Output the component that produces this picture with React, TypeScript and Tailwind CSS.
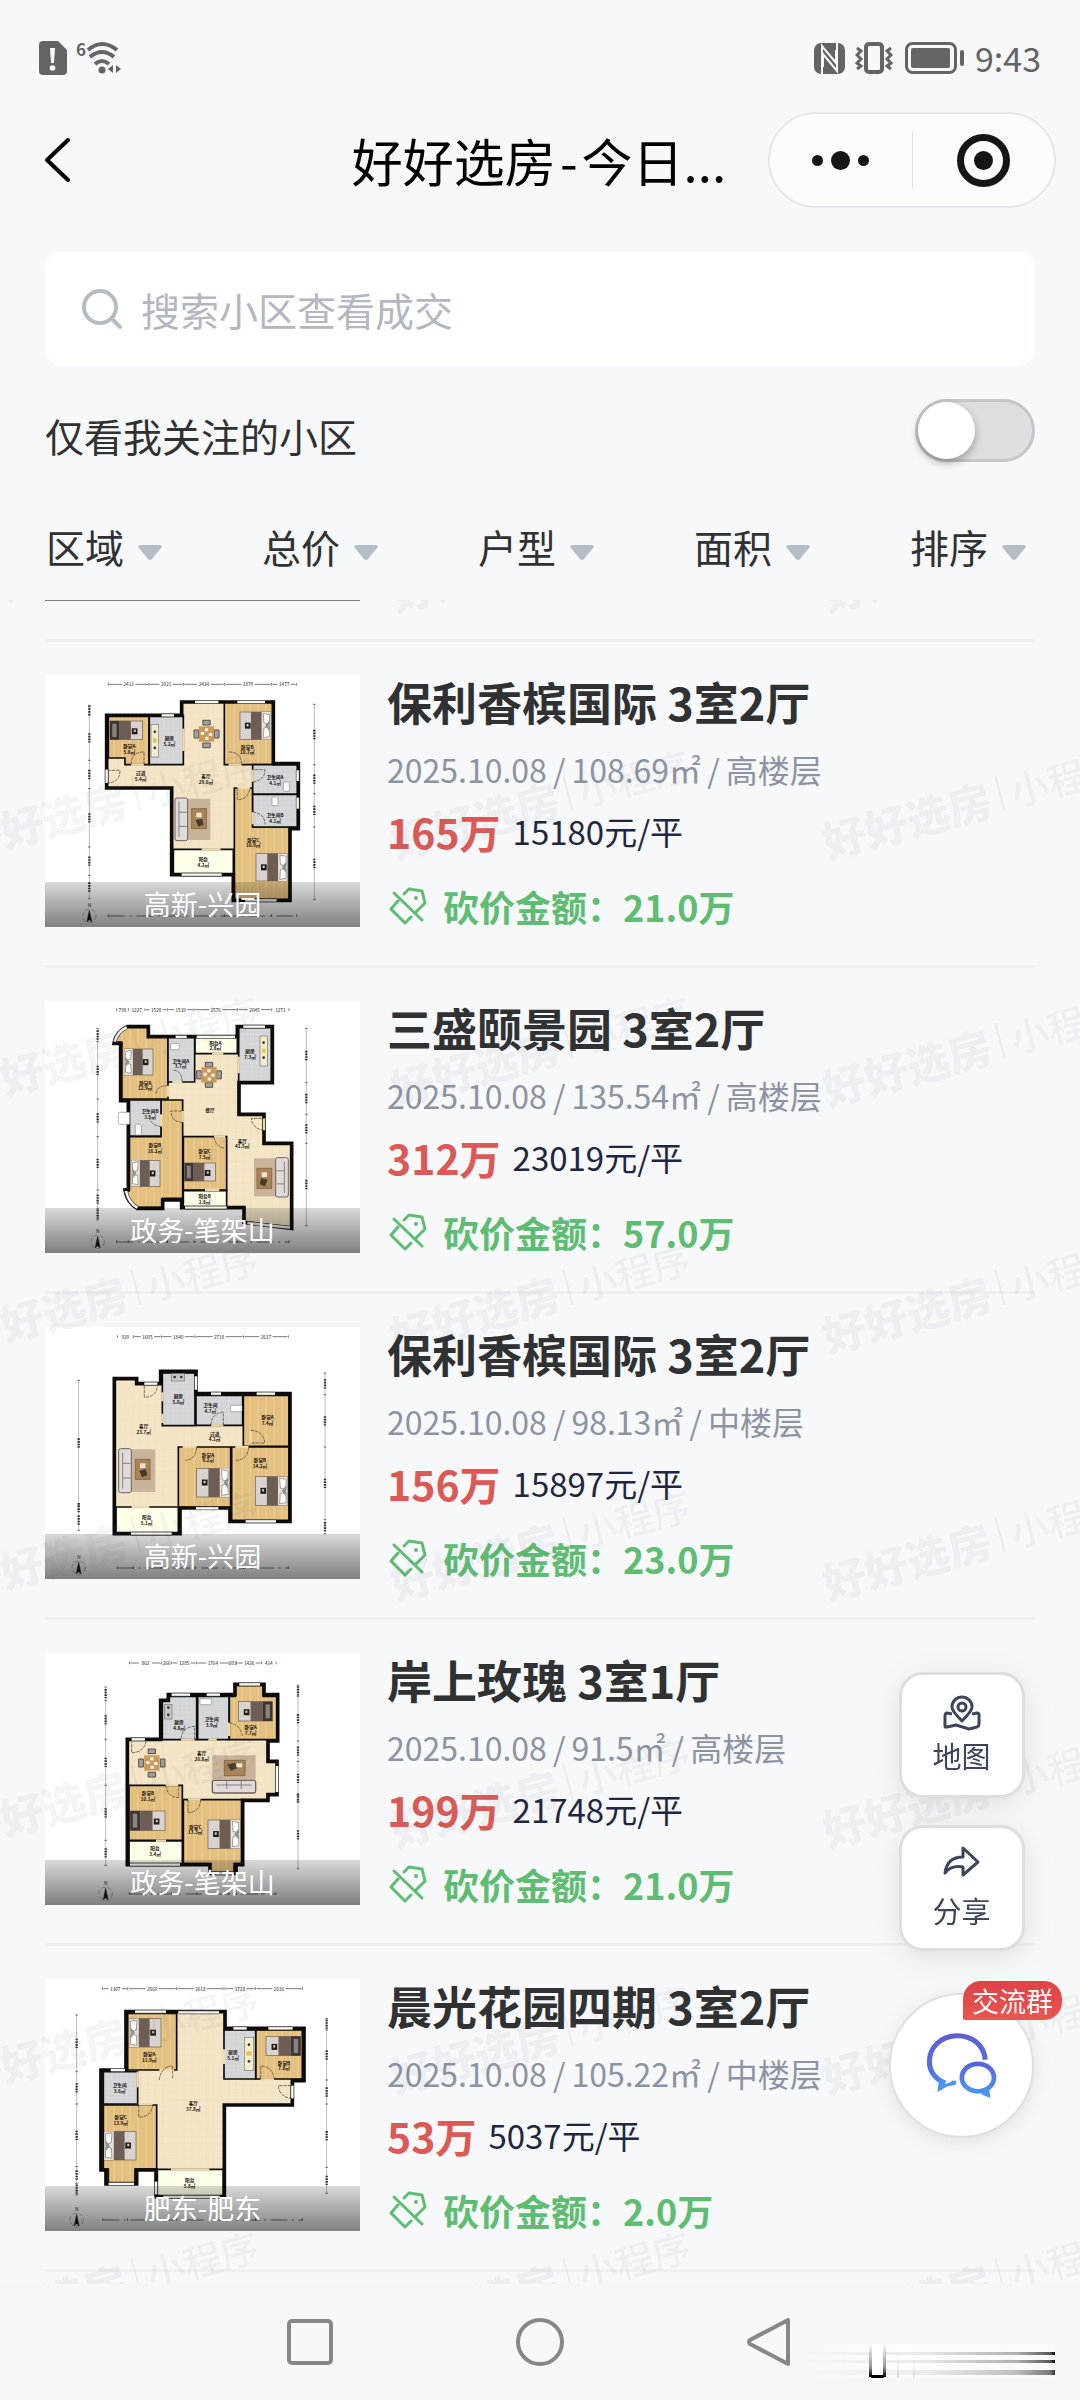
import React, { useState } from "react";

type Box = [number, number, number, number];
type Furniture = { kind: "bedL" | "bedR" | "sofaL" | "sofaR" | "sofaB" | "dining" | "stove" | "basin"; box: Box };
type Plan = {
  id: string;
  top: number;
  outline: string;
  wood: string[];
  gray: string[];
  balcony: string[];
  windows: string[];
  gaps: string[];
  doors: string[];
  furniture: Furniture[];
  labels: [number, number, string, string][];
  dimTop: { y: number; ticks: number[]; nums: string[] };
  dimLeft: { x: number; ticks: number[] };
  dimRight: { x: number; ticks: number[] };
};

type Listing = {
  name: string;
  area: string;
  floor: string;
  price: string;
  unit: string;
  cut: string;
  place: string;
  plan: Plan;
};

const plans: Plan[] = [
  {
    id: "a",
    top: 44,
    outline: "M455 125H730V310H805V505H780V720H610V643H425V383H230V165H455Z",
    wood: ["M235 165H357V313H285V293H235Z", "M583 125H730V313H583Z", "M613 383H668V500H780V720H613Z"],
    gray: ["M358 165H460V313H358Z", "M668 313H803V402H668Z", "M668 402H803V500H668Z"],
    balcony: ["M430 567H610V643H430Z"],
    windows: ["M495 125H565", "M622 125H705", "M395 165H432", "M803 330V362", "M803 412V445", "M455 643H575", "M645 720H740", "M230 328V368"],
    gaps: ["M303 313H342", "M596 313H635", "M668 328V365", "M668 455V492", "M622 383H660", "M460 205V272", "M515 567H572"],
    doors: ["M342 313V275Q303 275 303 313", "M635 313Q635 275 596 275", "M668 365Q705 360 705 328H668", "M622 383V418Q655 418 660 383", "M230 368Q270 368 270 330H236", "M668 455Q705 460 705 492"],
    furniture: [
      { kind: "bedL", box: [240, 182, 98, 56] },
      { kind: "bedR", box: [630, 155, 92, 82] },
      { kind: "bedR", box: [678, 580, 94, 82] },
      { kind: "sofaL", box: [433, 413, 108, 128] },
      { kind: "dining", box: [492, 180, 75, 82] },
      { kind: "stove", box: [363, 193, 23, 97] },
      { kind: "basin", box: [760, 365, 18, 28] },
      { kind: "basin", box: [726, 410, 18, 26] },
    ],
    labels: [[298, 264, "卧室A", "5.8㎡"], [418, 240, "厨房", "5.2㎡"], [652, 266, "卧室B", "10.7㎡"], [332, 346, "过道", "5.4㎡"], [528, 354, "客厅", "29.6㎡"], [735, 358, "卫生间A", "4.1㎡"], [735, 471, "卫生间B", "4.1㎡"], [670, 545, "卧室C", "16.9㎡"], [520, 604, "阳台", "4.2㎡"]],
    dimTop: { y: 72, ticks: [235, 357, 460, 583, 725, 800], nums: ["2411", "2021", "2434", "2870", "1477"] },
    dimLeft: { x: 178, ticks: [135, 165, 300, 385, 560, 645, 715] },
    dimRight: { x: 853, ticks: [132, 313, 400, 500, 718] },
  },
  {
    id: "b",
    top: 48,
    outline: "M292 125H355V155H622V125H727V293H627V388H702V475H785V730L642 712V668H455V645H398V670H322Q292 655 285 615H295V347H272V175H252Q258 140 292 125Z",
    wood: ["M292 125H355V155H414V342H275V172H254Q260 140 292 125Z", "M298 455H393V345H458V640H398V668H322Q292 655 287 612H298Z", "M460 455H590V615H460Z"],
    gray: ["M414 155H494V291H414Z", "M626 125H725V291H626Z", "M298 345H393V453H298Z"],
    balcony: ["M495 157H622V206H495Z", "M460 617H590V668H460Z"],
    windows: ["M500 156H615", "M437 156H470", "M640 125H705", "M254 170Q262 140 290 127", "M288 618Q296 654 322 668", "M652 714L780 728", "M465 668H590"],
    gaps: ["M427 291H457", "M414 302V335", "M458 378V412", "M393 388V425", "M552 455H586", "M546 206H580", "M702 400V436", "M626 215V265", "M525 615H568"],
    doors: ["M457 291Q455 255 427 255", "M414 302Q380 302 378 325", "M458 412Q425 412 422 378H458", "M702 436Q668 432 664 400H702", "M552 455Q555 485 586 490", "M393 425Q360 420 356 392"],
    furniture: [
      { kind: "bedL", box: [283, 192, 86, 78] },
      { kind: "bedL", box: [304, 526, 86, 78] },
      { kind: "bedL", box: [464, 534, 92, 54] },
      { kind: "sofaR", box: [672, 518, 105, 118] },
      { kind: "dining", box: [500, 232, 74, 75] },
      { kind: "stove", box: [690, 153, 22, 90] },
      { kind: "basin", box: [422, 176, 26, 18] },
      { kind: "basin", box: [316, 418, 18, 32] },
      { kind: "basin", box: [265, 382, 34, 36] },
    ],
    labels: [[346, 300, "卧室A", "12.9㎡"], [452, 234, "卫生间A", "3.7㎡"], [556, 180, "阳台A", "2.8㎡"], [660, 205, "厨房", "7.3㎡"], [360, 385, "卫生间B", "3.5㎡"], [375, 488, "卧室B", "16.2㎡"], [524, 506, "卧室C", "7.5㎡"], [637, 474, "客厅", "41.5㎡"], [524, 641, "阳台B", "2.8㎡"], [540, 364, "", "餐厅"]],
    dimTop: { y: 74, ticks: [260, 295, 345, 412, 492, 622, 725, 777], nums: ["798", "1227", "1528", "1539", "2576", "2045", "1271"] },
    dimLeft: { x: 203, ticks: [130, 170, 342, 455, 615, 670, 705] },
    dimRight: { x: 829, ticks: [130, 293, 388, 475, 722] },
  },
  {
    id: "c",
    top: 52,
    outline: "M253 207H320V222H392V185H498V252H780V635H600V595H450V672H253Z",
    wood: ["M640 257H777V410H640Z", "M445 412H602V593H445Z", "M605 412H777V635H605Z"],
    gray: ["M397 190H495V348H397Z", "M498 257H638V347H498Z"],
    balcony: ["M258 592H445V670H258Z"],
    windows: ["M498 200V240", "M543 252H573", "M680 252H735", "M343 222H382", "M498 596H565", "M647 635H738", "M303 672H425"],
    gaps: ["M543 347H580", "M458 412H500", "M616 412H656", "M397 248V275", "M397 312V340", "M305 592H358", "M662 362V400"],
    doors: ["M343 228V263Q380 262 382 228", "M580 347V307Q543 312 543 347", "M500 412Q498 450 465 452", "M656 412Q654 450 618 452", "M662 362Q702 365 704 400H662"],
    furniture: [
      { kind: "sofaL", box: [264, 417, 112, 132] },
      { kind: "bedR", box: [500, 476, 98, 86] },
      { kind: "bedR", box: [676, 501, 96, 86] },
      { kind: "stove", box: [424, 192, 40, 22] },
      { kind: "basin", box: [602, 287, 34, 19] },
    ],
    labels: [[341, 357, "客厅", "23.7㎡"], [445, 267, "厨房", "5.0㎡"], [541, 293, "卫生间", "4.7㎡"], [713, 330, "卧室A", "7.4㎡"], [554, 379, "过道", "4.1㎡"], [534, 442, "卧室A", "9.2㎡"], [690, 459, "卧室B", "14.2㎡"], [350, 629, "阳台", "5.1㎡"]],
    dimTop: { y: 81, ticks: [262, 310, 394, 495, 640, 775], nums: ["920", "1605", "1840", "2718", "2637"] },
    dimLeft: { x: 146, ticks: [212, 588, 600, 662] },
    dimRight: { x: 885, ticks: [190, 255, 412, 630, 672] },
  },
  {
    id: "d",
    top: 53,
    outline: "M292 312H392V195H415V178H615V147H702V178H743V317H714V378H741V478H714V495H638V688H618V714H540V688H292Z",
    wood: ["M598 183H615V150H700V183H742V313H598Z", "M297 450H457V615H297Z", "M460 493H635V685H612V714H540V685H460Z"],
    gray: ["M397 195H415V183H500V313H397Z", "M503 183H597V313H503Z"],
    balcony: ["M297 617H457V687H297Z"],
    windows: ["M425 178H480", "M530 178H570", "M628 147H690", "M305 312H345", "M741 392V470", "M300 688H450", "M548 714H605"],
    gaps: ["M453 313H494", "M597 262V302", "M535 313H560", "M407 449H445", "M474 493H512", "M378 616H408"],
    doors: ["M494 313V273Q455 275 453 313", "M597 262Q632 268 637 302", "M348 315Q345 350 305 352V320", "M407 449Q412 485 445 487V449", "M474 493V532Q510 530 512 493"],
    furniture: [
      { kind: "bedR", box: [625, 199, 102, 58] },
      { kind: "bedL", box: [301, 527, 104, 58] },
      { kind: "bedR", box: [534, 554, 96, 85] },
      { kind: "sofaB", box: [547, 360, 130, 115] },
      { kind: "dining", box: [326, 341, 79, 84] },
      { kind: "stove", box: [404, 207, 22, 44] },
      { kind: "basin", box: [510, 190, 34, 18] },
    ],
    labels: [[447, 267, "厨房", "4.8㎡"], [545, 259, "卫生间", "3.9㎡"], [662, 283, "卧室A", "7.7㎡"], [515, 361, "客厅", "26.8㎡"], [354, 480, "卧室B", "10.1㎡"], [496, 581, "卧室C", "13.3㎡"], [375, 645, "阳台", "3.4㎡"]],
    dimTop: { y: 83, ticks: [298, 395, 425, 500, 597, 620, 695, 738], nums: ["862", "266", "1285", "1764", "203", "1426", "414"] },
    dimLeft: { x: 227, ticks: [155, 195, 312, 450, 615, 690] },
    dimRight: { x: 804, ticks: [150, 183, 317, 378, 480, 497, 700] },
  },
  {
    id: "e",
    top: 57,
    outline: "M288 155H585V205H822V362H787V435H583V710H378V630H320V672H228V630H213V330H288Z",
    wood: ["M293 160H440V330H293Z", "M677 210H817V357H677Z", "M220 435H380V627H315V668H235V627H220Z"],
    gray: ["M582 210H677V357H582Z", "M220 335H323V432H220Z"],
    balcony: ["M382 628H580V710H382Z"],
    windows: ["M315 155H408", "M445 157H567", "M610 205H650", "M715 205H788", "M242 330H285", "M787 377V415", "M236 672H312", "M378 665V703", "M400 711H570"],
    gaps: ["M388 330H432", "M692 358H732", "M326 433H368", "M582 268V312", "M323 335V382", "M423 628H538"],
    doors: ["M388 360Q392 320 428 318V355", "M692 355V318Q728 320 732 355", "M787 415Q748 412 745 377H787", "M326 435V472Q365 470 368 435"],
    furniture: [
      { kind: "bedL", box: [298, 176, 95, 85] },
      { kind: "bedR", box: [708, 229, 104, 58] },
      { kind: "bedL", box: [223, 514, 95, 86] },
      { kind: "stove", box: [643, 232, 28, 100] },
    ],
    labels: [[358, 290, "卧室A", "11.9㎡"], [609, 283, "厨房", "5.1㎡"], [762, 315, "卧室B", "7.8㎡"], [269, 383, "卫生间", "3.6㎡"], [272, 478, "卧室C", "13.9㎡"], [490, 436, "客厅", "37.8㎡"], [479, 668, "阳台", "5.8㎡"]],
    dimTop: { y: 86, ticks: [218, 293, 440, 582, 677, 817], nums: ["1307", "2869", "2618", "1728", "2616"] },
    dimLeft: { x: 140, ticks: [165, 335, 432, 620, 670, 705] },
    dimRight: { x: 890, ticks: [175, 210, 360, 432, 622, 700] },
  },
];

const listings: Listing[] = [
  { name: "保利香槟国际 3室2厅", area: "108.69㎡", floor: "高楼层", price: "165万", unit: "15180元/平", cut: "21.0万", place: "高新-兴园", plan: plans[0] },
  { name: "三盛颐景园 3室2厅", area: "135.54㎡", floor: "高楼层", price: "312万", unit: "23019元/平", cut: "57.0万", place: "政务-笔架山", plan: plans[1] },
  { name: "保利香槟国际 3室2厅", area: "98.13㎡", floor: "中楼层", price: "156万", unit: "15897元/平", cut: "23.0万", place: "高新-兴园", plan: plans[2] },
  { name: "岸上玫瑰 3室1厅", area: "91.5㎡", floor: "高楼层", price: "199万", unit: "21748元/平", cut: "21.0万", place: "政务-笔架山", plan: plans[3] },
  { name: "晨光花园四期 3室2厅", area: "105.22㎡", floor: "中楼层", price: "53万", unit: "5037元/平", cut: "2.0万", place: "肥东-肥东", plan: plans[4] },
];

function Bed({ box: [x, y, w, h], flip }: { box: Box; flip: boolean }) {
  const wide = h > 65;
  return (
    <g transform={flip ? `translate(${2 * x + w} 0) scale(-1 1)` : undefined}>
      <rect x={x} y={y} width={w} height={h} fill="#d8d3cf" stroke="#6a5b50" strokeWidth="2" />
      <rect x={x + w * 0.36} y={y} width={w * 0.35} height={h} fill="#6d5d54" />
      <rect x={x + w * 0.71} y={y} width={w * 0.29} height={h} fill={wide ? "#e9e4dc" : "#3b3532"} />
      {wide ? (
        <>
          <path d={`M${x + w * 0.76} ${y + 4}L${x + w * 0.96} ${y + 8}V${y + h * 0.45}L${x + w * 0.78} ${y + h * 0.4}Z`} fill="#fff" stroke="#77736f" strokeWidth="2" />
          <path d={`M${x + w * 0.78} ${y + h * 0.58}L${x + w * 0.96} ${y + h * 0.55}V${y + h - 8}L${x + w * 0.76} ${y + h - 5}Z`} fill="#fff" stroke="#77736f" strokeWidth="2" />
          <path d={`M${x + w * 0.96} ${y + h * 0.3}L${x + w * 0.82} ${y + h * 0.5}L${x + w * 0.96} ${y + h * 0.7}Z`} fill="#8d9690" />
        </>
      ) : (
        <rect x={x + w * 0.8} y={y + 8} width={w * 0.13} height={h - 16} fill="#8b837d" />
      )}
      <rect x={x + w * 0.16} y={y + h * 0.39} width="17" height="18" fill="#1f1c1a" />
      <rect x={x + w * 0.16 + 5} y={y + h * 0.39 + 4} width="6" height="7" fill="#d8d3cf" />
    </g>
  );
}

function Piece({ kind, box }: Furniture) {
  const [x, y, w, h] = box;
  if (kind === "bedL" || kind === "bedR") return <Bed box={box} flip={kind === "bedL"} />;
  if (kind === "basin") return <rect x={x} y={y} width={w} height={h} rx="3" fill="#fff" stroke="#8d8d8d" strokeWidth="2" />;
  if (kind === "stove") {
    const upright = h > w;
    return (
      <g>
        <rect x={x} y={y} width={w} height={h} fill={h > 60 ? "#f3ecc9" : "#c3c5c7"} stroke="#777" strokeWidth="2" />
        <circle cx={upright ? x + w / 2 : x + 10} cy={upright ? y + h * 0.22 : y + 10} r="4" fill="#333" />
        <circle cx={upright ? x + w / 2 : x + 30} cy={upright ? y + h * 0.72 : y + 10} r="4" fill="#333" />
        {h > 60 && <rect x={x + 6} y={y + h * 0.42} width={w - 12} height="13" fill="#e1c55c" />}
      </g>
    );
  }
  if (kind === "dining") {
    const cx = x + w / 2;
    const cy = y + h / 2;
    return (
      <g>
        <path d={`M${cx - 11} ${y}h22v14h-22z M${cx - 11} ${y + h - 14}h22v14h-22z M${x} ${cy - 12}h14v24h-14z M${x + w - 14} ${cy - 12}h14v24h-14z`} fill="#a3a09d" stroke="#55504c" strokeWidth="3" />
        <rect x={cx - 23} y={cy - 23} width="46" height="46" fill="#c99a5c" />
        <path d={`M${cx - 17} ${cy - 6}h10v9h-10z M${cx - 5} ${cy - 17}h10v9h-10z M${cx + 7} ${cy - 3}h10v9h-10z M${cx - 4} ${cy + 8}h10v9h-10z`} fill="#f4efe8" />
      </g>
    );
  }
  if (kind === "sofaB") {
    return (
      <g>
        <rect x={x} y={y} width={w} height={h - 42} fill="#c9b39b" />
        <rect x={x + 36} y={y + 15} width="62" height="46" fill="#a88457" stroke="#8b6b42" strokeWidth="3" />
        <path d={`M${x + 44} ${y + 28}l24 -6 8 16 -20 8z`} fill="#453b30" />
        <path d={`M${x + 72} ${y + 24}h18v12h-18z`} fill="#eee5d7" />
        <rect x={x} y={y + h - 40} width={w} height="38" rx="6" fill="#e0dad8" stroke="#6d6262" strokeWidth="4" />
        <path d={`M${x + 12} ${y + h - 26}H${x + w - 12} M${x + w / 3} ${y + h - 38}v24 M${x + (w * 2) / 3} ${y + h - 38}v24`} stroke="#8b7f80" strokeWidth="3" fill="none" />
      </g>
    );
  }
  return (
    <g transform={kind === "sofaR" ? `translate(${2 * x + w} 0) scale(-1 1)` : undefined}>
      <rect x={x + 30} y={y + 2} width={w - 30} height={h - 4} fill="#c9b39b" />
      <rect x={x + 52} y={y + 32} width="44" height="60" fill="#a88457" stroke="#8b6b42" strokeWidth="3" />
      <path d={`M${x + 66} ${y + 44}h16v14h-16z`} fill="#eee5d7" />
      <path d={`M${x + 64} ${y + 66}l20 -4 4 18 -16 6z`} fill="#453b30" />
      <rect x={x + 2} y={y} width="38" height={h} rx="6" fill="#e0dad8" stroke="#6d6262" strokeWidth="3" />
      <path d={`M${x + 14} ${y + 12}V${y + h - 12} M${x + 14} ${y + h / 3}h24 M${x + 14} ${y + (h * 2) / 3}h24`} stroke="#8b7f80" strokeWidth="3" fill="none" />
    </g>
  );
}

function FloorPlan({ plan }: { plan: Plan }) {
  const wood = `wood-${plan.id}`;
  const tile = `tile-${plan.id}`;
  const gray = `gray-${plan.id}`;
  const { dimTop, dimLeft, dimRight } = plan;
  return (
    <svg viewBox={`45 ${plan.top} 945 756`} className="block w-full" aria-hidden="true">
      <defs>
        <pattern id={wood} width="24" height="60" patternUnits="userSpaceOnUse">
          <rect width="24" height="60" fill="#e5c283" />
          <path d="M6 0V60M18 0V60" stroke="#dbb56f" strokeWidth="2" />
          <path d="M12 0V60" stroke="#edd09a" strokeWidth="3" />
        </pattern>
        <pattern id={tile} width="22" height="22" patternUnits="userSpaceOnUse">
          <rect width="22" height="22" fill="#f3e5c6" />
          <path d="M0 0H22M0 0V22" stroke="#ecddba" strokeWidth="2" />
        </pattern>
        <pattern id={gray} width="14" height="14" patternUnits="userSpaceOnUse">
          <rect width="14" height="14" fill="#d5d7d9" />
          <path d="M0 0H14M0 0V14" stroke="#c9cccf" strokeWidth="2" />
        </pattern>
      </defs>
      <path d={plan.outline} fill={`url(#${tile})`} />
      <g stroke="#0d0b09" strokeWidth="5">
        {plan.wood.map((d) => <path key={d} d={d} fill={`url(#${wood})`} />)}
        {plan.gray.map((d) => <path key={d} d={d} fill={`url(#${gray})`} />)}
        {plan.balcony.map((d) => <path key={d} d={d} fill="#fefee9" />)}
      </g>
      <path d={plan.outline} fill="none" stroke="#0d0b09" strokeWidth="11" />
      {plan.gaps.map((d) => <path key={d} d={d} stroke="#eed9ae" strokeWidth="7" />)}
      {plan.windows.map((d) => (
        <g key={d} fill="none">
          <path d={d} stroke="#4a4743" strokeWidth="11" />
          <path d={d} stroke="#f8f8f4" strokeWidth="7" />
        </g>
      ))}
      {plan.doors.map((d) => <path key={d} d={d} fill="none" stroke="#3c352c" strokeWidth="2" strokeDasharray="10 3" />)}
      {plan.furniture.map((f) => <Piece key={f.box.join()} {...f} />)}
      <g fill="#15110c" textAnchor="middle" fontSize="14" fontWeight="700">
        {plan.labels.map(([x, y, name, size]) => (
          <g key={`${x}-${y}`}>
            {name && <text x={x} y={y - 1}>{name}</text>}
            <text x={x} y={y + 16}>{size}</text>
          </g>
        ))}
        {dimTop.nums.map((n, i) => (
          <text key={i} x={(dimTop.ticks[i] + dimTop.ticks[i + 1]) / 2} y={dimTop.y + 6} fontWeight="400">{n}</text>
        ))}
      </g>
      <g stroke="#333" strokeWidth="2" fill="#333">
        {dimTop.nums.map((n, i) => {
          const a = dimTop.ticks[i];
          const b = dimTop.ticks[i + 1];
          const m = (a + b) / 2;
          return b - a > 60 ? <path key={i} d={`M${a + 3} ${dimTop.y}H${m - 20}M${m + 20} ${dimTop.y}H${b - 3}`} /> : null;
        })}
        {dimTop.ticks.map((x) => <path key={x} d={`M${x} ${dimTop.y - 4}V${dimTop.y + 4}`} />)}
        {dimTop.ticks.map((x) => <path key={x} d={`M${x} ${plan.top + 718}v8`} />)}
        <path d={`M${dimTop.ticks[0]} ${plan.top + 723}H${dimTop.ticks[dimTop.ticks.length - 1]}`} strokeDasharray="50 14 6 14" />
        {[dimLeft, dimRight].map((d) => (
          <g key={d.x}>
            <path d={`M${d.x} ${d.ticks[0]}V${d.ticks[d.ticks.length - 1]}`} strokeWidth="1" />
            {d.ticks.slice(1).map((t, i) => (
              <path key={t} d={`M${d.x} ${(t + d.ticks[i]) / 2 - 14}v28`} strokeWidth="7" strokeDasharray="5 3" />
            ))}
            {d.ticks.map((t) => <path key={t} d={`M${d.x - 4} ${t}h8`} />)}
          </g>
        ))}
        <circle cx={dimLeft.x} cy={plan.top + 722} r="20" fill="none" strokeWidth="1" strokeDasharray="14 6" />
        <path d={`M${dimLeft.x} ${plan.top + 706}l7 34-7-6-7 6z`} fill="#111" />
        <text x={dimLeft.x - 5} y={plan.top + 695} fontSize="15" stroke="none">N</text>
      </g>
    </svg>
  );
}

function TagIcon() {
  return (
    <svg viewBox="0 0 38 38" className="ml-[2px] h-[38px] w-[38px] shrink-0" fill="none" stroke="#5fbc73" strokeWidth="3" strokeLinejoin="round" strokeLinecap="round" aria-hidden="true">
      <path d="M15 7L20 2L33 4L36 16L27 25" />
      <path d="M9 14L2 22L16 36L22 30" />
      <path d="M5 6L33 33" />
      <circle cx="27" cy="11" r="2" fill="#5fbc73" stroke="none" />
    </svg>
  );
}

function ListingRow({ item }: { item: Listing }) {
  return (
    <article className="flex items-start gap-[27px] border-t-[3px] border-[#eff0f2] pt-[33px] pb-[38px]">
      <div className="relative w-[315px] shrink-0 overflow-hidden bg-white">
        <FloorPlan plan={item.plan} />
        <div className="absolute inset-x-0 bottom-0 flex h-[45px] items-center justify-center bg-linear-to-b from-black/15 to-black/50 text-[27px] text-white">
          {item.place}
        </div>
      </div>
      <div className="min-w-0">
        <h2 className="text-[45px] leading-[54px] font-bold text-[#303133]">{item.name}</h2>
        <p className="mt-4 text-[32px] leading-[48px] text-[#8d93a3]">
          2025.10.08<span className="px-[6px]">/</span>{item.area}<span className="px-[6px]">/</span>{item.floor}
        </p>
        <p className="mt-3 flex items-center gap-3 leading-[52px]">
          <strong className="text-[41px] font-bold text-[#dc5a56]">{item.price}</strong>
          <span className="text-[33px] text-[#1f2740]">{item.unit}</span>
        </p>
        <p className="mt-[30px] flex items-center text-[36px] leading-[36px] font-bold text-[#5fbc73]">
          <TagIcon />
          <span className="ml-4">砍价金额：{item.cut}</span>
        </p>
      </div>
    </article>
  );
}

function Watermark() {
  return (
    <div className="pointer-events-none absolute inset-0 flex justify-center overflow-hidden text-[#5a5f6e]/[0.08]" aria-hidden="true">
      <div className="-mt-[169px] grid h-max shrink-0 auto-rows-[247px] grid-cols-[432px_432px_432px]">
        {Array.from({ length: 24 }, (_, i) => (
          <div key={i} className="flex items-center justify-center">
            <div className="flex -rotate-[15deg] items-center whitespace-nowrap">
              <span className="text-[43px] font-black">好好选房</span>
              <span className="mx-[10px] h-[36px] w-[2px] bg-current" />
              <span className="text-[38px] font-medium">小程序</span>
            </div>
          </div>
        ))}
      </div>
    </div>
  );
}

function StatusBar() {
  return (
    <div className="flex h-[112px] items-center justify-between pt-1 pr-[39px] pl-[39px] text-[#646464]">
      <div className="flex items-center gap-[9px]">
        <svg viewBox="0 0 28 34" className="h-[34px] w-[28px]" aria-hidden="true">
          <path d="M4 0H19L28 9V30Q28 34 24 34H4Q0 34 0 30V4Q0 0 4 0Z" fill="currentColor" />
          <path d="M11 7h5l-1 15h-3z" fill="#f7f8fa" />
          <circle cx="13.500" cy="27" r="2.800" fill="#f7f8fa" />
        </svg>
        <div className="flex items-start">
          <span className="text-[17px] leading-[15px] font-bold">6</span>
          <svg viewBox="0 0 36 34" className="h-[34px] w-[36px]" fill="none" stroke="currentColor" strokeWidth="4" aria-hidden="true">
            <path d="M2 9Q16 -3 31 9" />
            <path d="M4 16Q16 6 28 16" />
            <path d="M9 23Q16 17 23 23" />
            <circle cx="16" cy="29" r="3.500" fill="currentColor" stroke="none" />
            <path d="M27 24V32L22 28ZM30 24V32L35 28Z" fill="currentColor" stroke="none" />
          </svg>
        </div>
      </div>
      <div className="flex items-center">
        <svg viewBox="0 0 31 31" className="h-[31px] w-[31px]" aria-hidden="true">
          <rect width="31" height="31" rx="7" fill="currentColor" />
          <path d="M8 31V3L22 20V7M23 0V28L9 11V24" fill="none" stroke="#f7f8fa" strokeWidth="2" />
        </svg>
        <svg viewBox="0 0 38 32" className="ml-[10px] h-8 w-[38px]" fill="none" stroke="currentColor" aria-hidden="true">
          <rect x="11" y="2" width="16" height="28" rx="3" strokeWidth="4" />
          <path d="M2 6L6 9L2 13L6 17L2 21L6 24L2 27M36 6L32 9L36 13L32 17L36 21L32 24L36 27" strokeWidth="3" />
        </svg>
        <svg viewBox="0 0 60 32" className="ml-[12px] h-8 w-[60px]" aria-hidden="true">
          <rect x="1.500" y="1.500" width="49" height="29" rx="6" fill="none" stroke="currentColor" strokeWidth="3" />
          <rect x="6" y="6" width="39" height="20" rx="2" fill="currentColor" />
          <rect x="55" y="8" width="4" height="16" rx="2" fill="currentColor" />
        </svg>
        <time className="ml-[10px] text-[34px] leading-[40px]">9:43</time>
      </div>
    </div>
  );
}

function TitleBar() {
  return (
    <header className="grid h-24 grid-cols-[1fr_auto_1fr] items-center pr-6 pl-[42px]">
      <button type="button" aria-label="返回" className="h-12 w-8">
        <svg viewBox="0 0 32 48" className="h-full w-full" fill="none" stroke="#000" strokeWidth="4" strokeLinecap="round" strokeLinejoin="round">
          <path d="M26 4L5 24L26 44" />
        </svg>
      </button>
      <h1 className="pr-5 text-[51px] leading-[60px] text-black">
        好好选房<span className="px-1">-</span>今日...
      </h1>
      <div className="flex h-24 w-[288px] items-center justify-self-end rounded-full border-2 border-[#e6e7e9] bg-[#fcfcfd]">
        <button type="button" aria-label="更多" className="flex flex-1 items-center justify-center gap-2">
          <i className="h-[11px] w-[11px] rounded-full bg-[#161616]" />
          <i className="h-[19px] w-[19px] rounded-full bg-[#161616]" />
          <i className="h-[11px] w-[11px] rounded-full bg-[#161616]" />
        </button>
        <span className="h-[58px] w-px bg-[#e3e4e6]" />
        <button type="button" aria-label="关闭" className="flex flex-1 items-center justify-center">
          <span className="flex h-[53px] w-[53px] items-center justify-center rounded-full border-[7px] border-[#161616]">
            <i className="h-[19px] w-[19px] rounded-full bg-[#161616]" />
          </span>
        </button>
      </div>
    </header>
  );
}

function FloatingActions() {
  return (
    <div className="fixed right-[46px] bottom-[262px] flex flex-col items-center">
      <button type="button" className="flex h-[126px] w-[126px] flex-col items-center justify-center rounded-[24px] border-[3px] border-[#dddee0] bg-white text-[29px] leading-[40px] text-[#3d4658] shadow-[0_6px_30px_rgba(0,0,0,0.1)]">
        <svg viewBox="0 0 38 36" className="mb-1 h-9 w-[38px]" fill="none" stroke="currentColor" strokeWidth="3" strokeLinejoin="round" aria-hidden="true">
          <path d="M19 26Q9 16 9 12A10 10 0 0 1 29 12Q29 16 19 26Z" />
          <circle cx="19" cy="12" r="4" />
          <path d="M9 19L4 18Q2 18 2 21V31Q2 33 4 32L13 30L26 34L34 32Q36 31 36 29V20Q36 18 34 18L29 19" />
        </svg>
        地图
      </button>
      <button type="button" className="mt-[27px] flex h-[126px] w-[126px] flex-col items-center justify-center rounded-[24px] border-[3px] border-[#dddee0] bg-white text-[29px] leading-[40px] text-[#3d4658] shadow-[0_6px_30px_rgba(0,0,0,0.1)]">
        <svg viewBox="0 0 38 32" className="mb-3 h-8 w-[38px]" fill="none" stroke="currentColor" strokeWidth="3" strokeLinejoin="round" aria-hidden="true">
          <path d="M20 2L35 16L20 29V21Q8 19 2 27Q4 11 20 11Z" />
        </svg>
        分享
      </button>
      <div className="relative mt-[42px]">
        <button type="button" aria-label="加入群聊" className="flex h-[145px] w-[145px] items-center justify-center rounded-full border-2 border-[#dfe0e4] bg-white shadow-[0_4px_20px_rgba(0,0,0,0.1)]">
          <svg viewBox="200 1185 215 200" className="h-[67px] w-[72px]" fill="none" strokeWidth="15" aria-hidden="true">
            <defs>
              <linearGradient id="chat" gradientUnits="userSpaceOnUse" x1="0" y1="1190" x2="0" y2="1380">
                <stop offset="0" stopColor="#5b5fd3" />
                <stop offset="0.550" stopColor="#5570df" />
                <stop offset="1" stopColor="#4a9df2" />
              </linearGradient>
              <linearGradient id="chatSmall" gradientUnits="userSpaceOnUse" x1="0" y1="1272" x2="0" y2="1382">
                <stop offset="0" stopColor="#5860d8" />
                <stop offset="1" stopColor="#4a9df2" />
              </linearGradient>
            </defs>
            <path d="M377 1268C373 1222 337 1196 293 1196C246 1196 210 1230 210 1274C210 1300 224 1320 248 1334" stroke="url(#chat)" />
            <path d="M240 1322L260 1330L257 1340Q274 1337 278 1330L291 1331L289 1342Q276 1347 263 1348L234 1364Z" fill="#4c93ee" />
            <ellipse cx="355" cy="1321" rx="48" ry="41" stroke="url(#chatSmall)" strokeWidth="14" />
            <path d="M360 1360L368 1372L392 1382L389 1356Z" fill="#4c93ee" />
          </svg>
        </button>
        <span className="absolute -top-3 -right-[28px] rounded-[18px] rounded-bl-[2px] bg-linear-to-b from-[#dd4247] to-[#ec5650] px-[9px] text-[27px] leading-[39px] whitespace-nowrap text-white">
          交流群
        </span>
      </div>
    </div>
  );
}

function SystemNav() {
  return (
    <nav className="relative flex h-[116px] items-center justify-center gap-[182px] bg-[#f7f7f7] text-[#878787]">
      <button type="button" aria-label="最近任务" className="h-12 w-12">
        <svg viewBox="0 0 48 48" fill="none" stroke="currentColor" strokeWidth="4"><rect x="3" y="3" width="42" height="42" rx="3" /></svg>
      </button>
      <button type="button" aria-label="主屏幕" className="h-12 w-12">
        <svg viewBox="0 0 48 48" fill="none" stroke="currentColor" strokeWidth="4"><circle cx="24" cy="24" r="22" /></svg>
      </button>
      <button type="button" aria-label="返回上一页" className="h-12 w-12">
        <svg viewBox="0 0 48 48" fill="none" stroke="currentColor" strokeWidth="4" strokeLinejoin="round"><path d="M42 2V46L4 26Q2 24 4 22Z" /></svg>
      </button>
      <svg viewBox="0 0 260 40" className="absolute right-[20px] bottom-[20px] h-10 w-[260px]" aria-hidden="true">
        <defs>
          <linearGradient id="streak" x1="0" x2="1" y1="0" y2="0">
            <stop offset="0" stopColor="#000" stopOpacity="0" />
            <stop offset="0.500" stopColor="#000" stopOpacity="0.080" />
            <stop offset="0.850" stopColor="#000" stopOpacity="0.300" />
            <stop offset="0.980" stopColor="#000" stopOpacity="0.650" />
            <stop offset="1" stopColor="#000" />
          </linearGradient>
          <linearGradient id="drop" x1="0" x2="0" y1="0" y2="1">
            <stop offset="0" stopColor="#000" stopOpacity="0" />
            <stop offset="0.700" stopColor="#000" stopOpacity="0.400" />
            <stop offset="1" stopColor="#000" />
          </linearGradient>
          <linearGradient id="haze" x1="0" x2="1" y1="0" y2="0">
            <stop offset="0" stopColor="#fff" stopOpacity="0" />
            <stop offset="0.400" stopColor="#fff" stopOpacity="0.700" />
            <stop offset="1" stopColor="#fff" stopOpacity="0.300" />
          </linearGradient>
        </defs>
        <rect x="0" y="4" width="255" height="34" fill="url(#haze)" />
        <rect x="0" y="12" width="255" height="3" fill="url(#streak)" />
        <rect x="0" y="20" width="255" height="3" fill="url(#streak)" />
        <rect x="0" y="30" width="255" height="5" fill="url(#streak)" opacity="0.800" />
        <rect x="71" y="4" width="14" height="32" fill="#fff" />
        <rect x="69" y="3" width="3" height="34" fill="url(#drop)" />
        <rect x="83" y="3" width="3" height="34" fill="url(#drop)" />
        <rect x="71" y="35" width="13" height="3" rx="1" fill="#000" />
        <rect x="97" y="10" width="2" height="28" fill="url(#drop)" opacity="0.150" />
        <rect x="113" y="10" width="2" height="28" fill="url(#drop)" opacity="0.100" />
      </svg>
    </nav>
  );
}

export default function App() {
  const [followed, setFollowed] = useState(false);
  return (
    <div className="flex min-h-screen flex-col bg-[#f7f8fa] font-['Noto_Sans_CJK_SC',sans-serif] text-[#303133]">
      <StatusBar />
      <TitleBar />

      <div className="px-[45px] pt-11">
        <label className="flex h-[114px] items-center gap-[18px] rounded-[18px] bg-white px-[36px]">
          <svg viewBox="0 0 42 42" className="h-[42px] w-[42px] shrink-0" fill="none" stroke="#b4bcc4" strokeWidth="4" strokeLinecap="round" aria-hidden="true">
            <circle cx="19" cy="19" r="16" />
            <path d="M31 31L39 39" />
          </svg>
          <input
            type="text"
            aria-label="搜索小区"
            placeholder="搜索小区查看成交"
            className="min-w-0 flex-1 bg-transparent text-[39px] leading-[56px] outline-none placeholder:text-[#b4b7bf]"
          />
        </label>

        <label className="relative mt-[33px] flex h-[64px] items-start justify-between">
          <span className="pt-2 text-[39px] leading-[56px]">仅看我关注的小区</span>
          <input type="checkbox" role="switch" checked={followed} onChange={() => setFollowed(!followed)} className="peer sr-only" />
          <span className="flex h-[63px] w-[120px] items-center rounded-full border-[3px] border-[#c5c6ca] bg-[#dddee2] peer-checked:justify-end peer-checked:bg-[#5fbc73]">
            <i className="h-[57px] w-[57px] rounded-full bg-white shadow-[0_4px_8px_rgba(0,0,0,0.3)]" />
          </span>
        </label>
      </div>

      <div className="-mr-[46px] grid h-[137px] grid-cols-5 overflow-hidden pt-[55px] pl-[46px]">
        {["区域", "总价", "户型", "面积", "排序"].map((name) => (
          <button key={name} type="button" className="flex h-[56px] items-center gap-[14px] text-[39px] leading-[56px]">
            {name}
            <svg viewBox="0 0 24 15" className="mt-3 h-[15px] w-6" aria-hidden="true">
              <path d="M2 0H22Q25 1 23 3L14 14Q12 16 10 14L1 3Q-1 1 2 0Z" fill="#b3bdc5" />
            </svg>
          </button>
        ))}
      </div>

      <main className="relative flex-1 px-[45px] pb-3">
        <div className="mb-[38px] h-px w-[315px] bg-[#808080]" />
        {listings.map((item, i) => <ListingRow key={i} item={item} />)}
        <div className="h-[3px] bg-[#eff0f2]" />
        <Watermark />
      </main>

      <FloatingActions />
      <SystemNav />
    </div>
  );
}
